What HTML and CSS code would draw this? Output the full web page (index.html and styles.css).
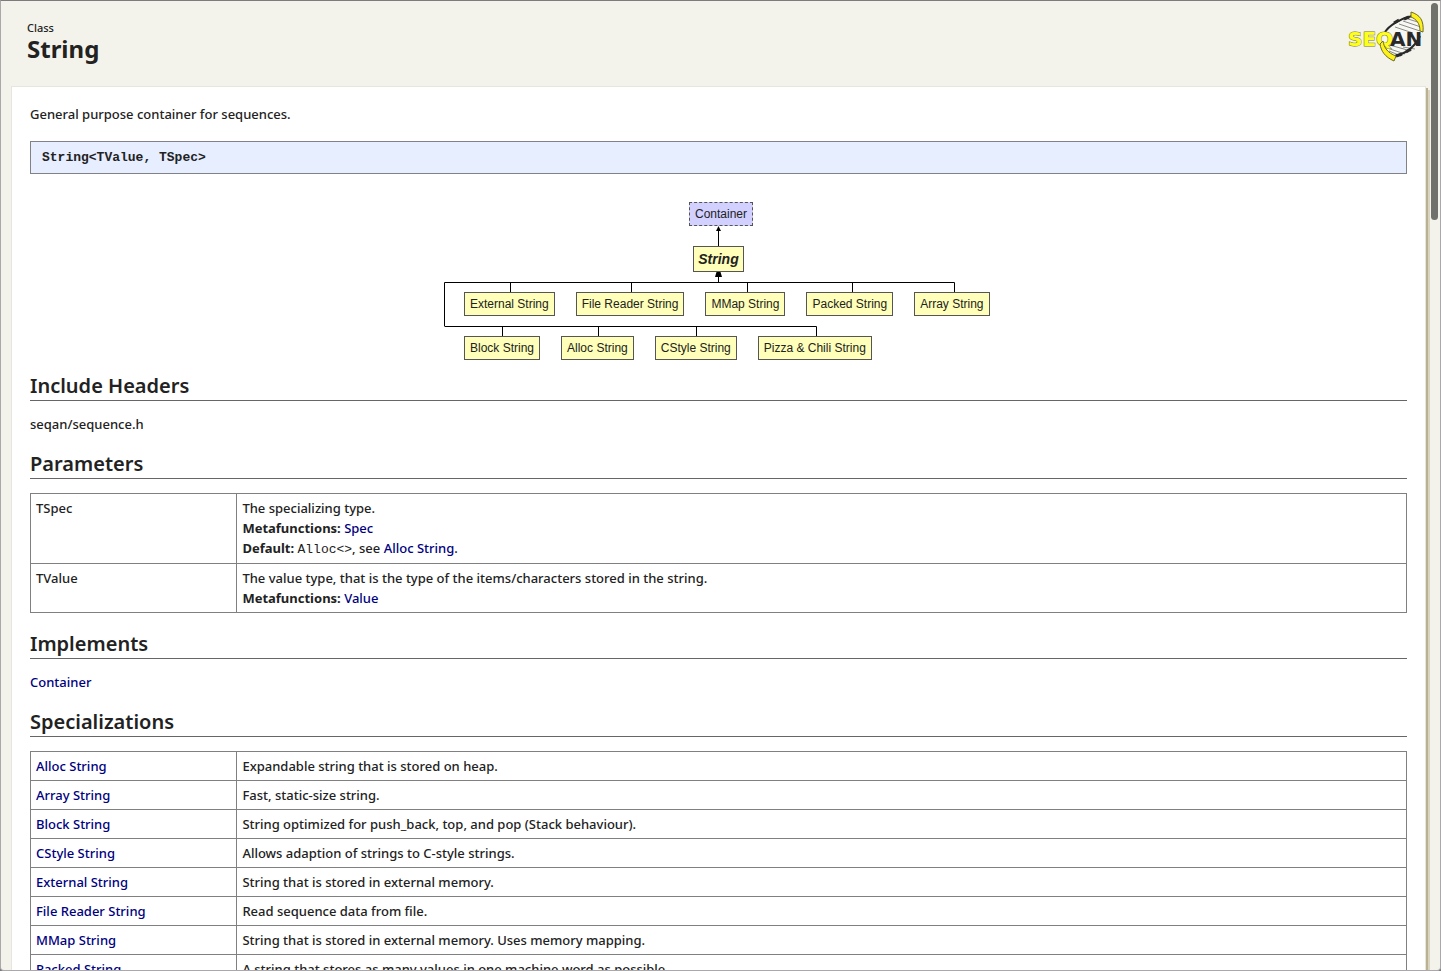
FILE: index.html
```html
<!DOCTYPE html>
<html lang="en">
<head>
<meta charset="utf-8">
<title>Class String - SeqAn</title>
<link rel="stylesheet" href="styles.css">
</head>
<body>
<div class="window">
  <header class="page-header">
    <div>
      <div class="kind">Class</div>
      <h1>String</h1>
    </div>
    <svg class="logo" viewBox="0 0 78 52" role="img" aria-label="SeqAn">
      <path d="M37 30C37 19 50 9 66 5C73 5 77 14 75 22C71 35 60 42 49 46C41 43 37 38 37 30Z" fill="#f7f7f3"/>
      <path d="M52 13L73 20M48 16L66 22M56 10L74 16M61 8L74 12M39 33L64 40M40 37L58 43M42 40L54 45M56 36L68 38" fill="none" stroke="#8c8c86"/>
      <path d="M38 21C42 15 52 8 65 5" fill="none" stroke="#292929" stroke-width="2"/>
      <path d="M48 45C58 43 68 36 73 25" fill="none" stroke="#292929" stroke-width="2"/>
      <path d="M49 45L55 43M59 41L64 38M47 12L52 9M57 8L62 6" stroke="#292929" stroke-width="3"/>
      <path d="M64 1C73 4 77 9 76 21L73 20C73 12 69 8 64 6Z" fill="#fff219" stroke="#6c6b29"/>
      <text class="logo-seq" x="1" y="35">SEQ</text>
      <path d="M36 30C37 37 41 42 49 45L47 50C38 46 34 40 33 33Z" fill="#fff219" stroke="#6c6b29"/>
      <text class="logo-an" x="43" y="35">AN</text>
    </svg>
  </header>
  <main class="panel">
    <p>General purpose container for sequences.</p>
    <pre class="signature">String&lt;TValue, TSpec&gt;</pre>

    <div class="tree">
      <svg class="tree-lines" viewBox="0 0 549 158" width="549" height="158" aria-hidden="true">
        <path d="M274.500 27V44M274.500 72V80M0.500 124V80.500H510.500V90M66.500 80V90M187.500 80V90M303.500 80V90M408.500 80V90M0.500 124.500H372.500V134M58.500 124V134M154.500 124V134M252.500 124V134" fill="none" stroke="#000"/>
        <path d="M274.500 24L277 29H272ZM272.500 70H276.500L278 75H271Z"/>
      </svg>
      <div class="tree-root"><a class="node concept" href="#container">Container</a></div>
      <div class="tree-current"><strong class="node current">String</strong></div>
      <div class="tree-row">
        <a class="node" href="#external">External String</a>
        <a class="node" href="#file-reader">File Reader String</a>
        <a class="node" href="#mmap">MMap String</a>
        <a class="node" href="#packed">Packed String</a>
        <a class="node" href="#array">Array String</a>
      </div>
      <div class="tree-row">
        <a class="node" href="#block">Block String</a>
        <a class="node" href="#alloc">Alloc String</a>
        <a class="node" href="#cstyle">CStyle String</a>
        <a class="node" href="#pizza-chili">Pizza &amp; Chili String</a>
      </div>
    </div>

    <h2 class="after-tree">Include Headers</h2>
    <p>seqan/sequence.h</p>

    <h2>Parameters</h2>
    <table>
      <tr><td class="name">TSpec</td><td>The specializing type.<br><b>Metafunctions:</b> <a href="#spec">Spec</a><br><b>Default:</b> <code>Alloc&lt;&gt;</code>, see <a href="#alloc">Alloc String</a>.</td></tr>
      <tr><td class="name">TValue</td><td>The value type, that is the type of the items/characters stored in the string.<br><b>Metafunctions:</b> <a href="#value">Value</a></td></tr>
    </table>

    <h2>Implements</h2>
    <p><a href="#container">Container</a></p>

    <h2>Specializations</h2>
    <table>
      <tr><td class="name"><a href="#alloc">Alloc String</a></td><td>Expandable string that is stored on heap.</td></tr>
      <tr><td class="name"><a href="#array">Array String</a></td><td>Fast, static-size string.</td></tr>
      <tr><td class="name"><a href="#block">Block String</a></td><td>String optimized for push_back, top, and pop (Stack behaviour).</td></tr>
      <tr><td class="name"><a href="#cstyle">CStyle String</a></td><td>Allows adaption of strings to C-style strings.</td></tr>
      <tr><td class="name"><a href="#external">External String</a></td><td>String that is stored in external memory.</td></tr>
      <tr><td class="name"><a href="#file-reader">File Reader String</a></td><td>Read sequence data from file.</td></tr>
      <tr><td class="name"><a href="#mmap">MMap String</a></td><td>String that is stored in external memory. Uses memory mapping.</td></tr>
      <tr><td class="name"><a href="#packed">Packed String</a></td><td>A string that stores as many values in one machine word as possible.</td></tr>
    </table>
  </main>
  <div class="scroll-thumb"></div>
</div>
</body>
</html>
```
FILE: styles.css
```css
* { box-sizing: border-box; }

body {
  margin: 0;
  background: #777;
  color: #222;
  font: 500 13px/20px "Noto Sans", "Open Sans", sans-serif;
}

.window {
  position: relative;
  height: 100vh;
  overflow: hidden;
  padding: 0 14px 0 10px;
  background: #f4f3eb;
  border: 1px solid #aaa8aa;
  border-top-color: #7f7b7c;
  border-radius: 0 0 4px 4px;
}

.page-header {
  display: flex;
  justify-content: space-between;
  align-items: flex-start;
  height: 85px;
  padding: 10px 1px 0 16px;
}

.kind { margin-top: 9px; font-size: 11px; line-height: 16px; }

h1 { margin: 0; font-size: 24px; line-height: 26px; }

.logo { width: 78px; height: 52px; }

.logo text {
  font-family: "DejaVu Sans", sans-serif;
  font-weight: bold;
  font-size: 20px;
}

.logo-seq { fill: #ffff19; stroke: #77772c; stroke-width: 1px; paint-order: stroke; }
.logo-an { fill: #292929; }

.panel {
  padding: 17px 18px 40px;
  background: #fff;
  border: 1px solid #e6e6dd;
  box-shadow: 2px 2px 0 #b9b192, 4px 4px 0 #d9d4bf;
}

p { margin: 0; }

a { color: #000080; text-decoration: none; }

.signature,
code { font-family: "Liberation Mono", "Courier New", monospace; font-size: 13px; }

code { line-height: 18px; }

.signature {
  margin: 17px 0 28px;
  padding: 6px 11px 5px;
  font-weight: bold;
  background: #e6eeff;
  border: 1px solid #808285;
}

.tree {
  position: relative;
  width: 549px;
  margin: 0 auto;
  display: flex;
  flex-direction: column;
  gap: 20px;
}

.tree-lines { position: absolute; left: 0; top: 0; }

.tree-root,
.tree-current,
.tree-row { display: flex; position: relative; }

.tree-root { justify-content: center; padding-left: 5px; }
.tree-current { justify-content: center; }
.tree-row { gap: 21px; padding-left: 20px; }

.node {
  padding: 3px 5px;
  font: 12px/16px "Liberation Sans", Arial, sans-serif;
  color: #222;
  white-space: nowrap;
  background: #ffffb9;
  border: 1px solid #555;
}

.concept { background: #d2d0ff; border-style: dashed; }

.current {
  padding: 3px 4px;
  font: italic bold 14px/18px "Liberation Sans", Arial, sans-serif;
}

h2 {
  margin: 18px 0 13px;
  padding-bottom: 2px;
  font-size: 20px;
  font-weight: 600;
  line-height: 24px;
  border-bottom: 1px solid #666;
}

.after-tree { margin-top: 14px; }

table { width: 100%; margin: 14px 0 19px; border-collapse: collapse; }

td {
  padding: 4px 5px;
  vertical-align: top;
  border: 1px solid #808080;
}

.name { width: 15%; }

.scroll-thumb {
  position: absolute;
  top: 2px;
  right: 2px;
  width: 7px;
  height: 217px;
  border-radius: 4px;
  background: #70716c;
}
```
